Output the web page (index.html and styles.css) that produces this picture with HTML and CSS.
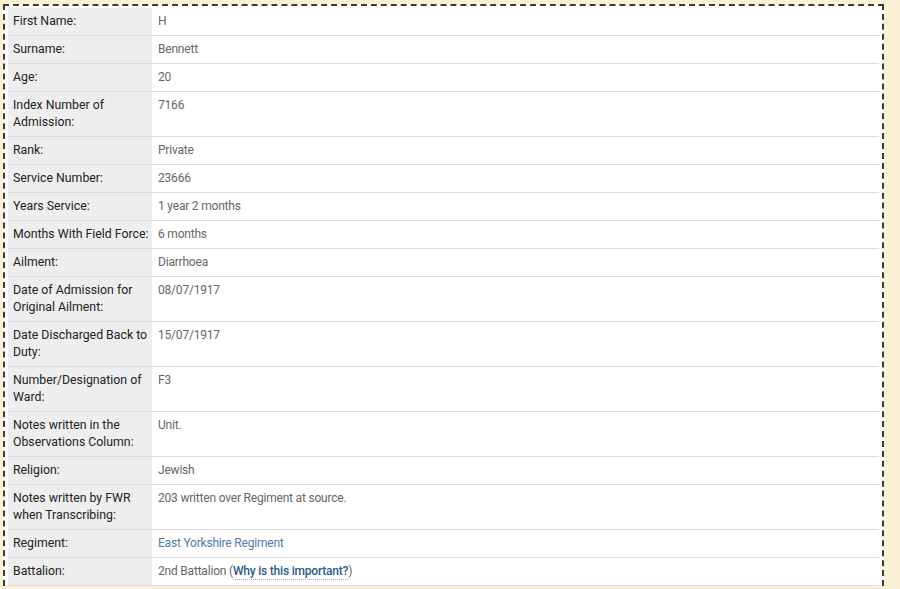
FILE: index.html
```html
<!DOCTYPE html>
<html lang="en">
<head>
    <meta charset="UTF-8">
    <title>Record</title>
    <link rel="stylesheet" href="styles.css">
</head>
<body>
    <div class="record">
        <table class="details">
            <tr><th>First Name:</th><td>H</td></tr>
            <tr><th>Surname:</th><td>Bennett</td></tr>
            <tr><th>Age:</th><td>20</td></tr>
            <tr><th>Index Number of<br>Admission:</th><td>7166</td></tr>
            <tr><th>Rank:</th><td>Private</td></tr>
            <tr><th>Service Number:</th><td>23666</td></tr>
            <tr><th>Years Service:</th><td>1 year 2 months</td></tr>
            <tr><th>Months With Field Force:</th><td>6 months</td></tr>
            <tr><th>Ailment:</th><td>Diarrhoea</td></tr>
            <tr><th>Date of Admission for<br>Original Ailment:</th><td>08/07/1917</td></tr>
            <tr><th>Date Discharged Back to<br>Duty:</th><td>15/07/1917</td></tr>
            <tr><th>Number/Designation of<br>Ward:</th><td>F3</td></tr>
            <tr><th>Notes written in the<br>Observations Column:</th><td>Unit.</td></tr>
            <tr><th>Religion:</th><td>Jewish</td></tr>
            <tr><th>Notes written by FWR<br>when Transcribing:</th><td>203 written over Regiment at source.</td></tr>
            <tr><th>Regiment:</th><td><a href="#" class="link">East Yorkshire Regiment</a></td></tr>
            <tr><th>Battalion:</th><td>2nd Battalion (<a href="#" class="help">Why is this important?</a>)</td></tr>
        </table>
    </div>
</body>
</html>
```

FILE: styles.css
```css
body {
    margin: 0;
    background-color: #f9f0d5;
    font-family: Roboto, Arial, sans-serif;
    font-size: 12px;
}

.record {
    width: 881px;
    margin: 4px 0 0 3px;
    padding: 2px 3px 0 3px;
    background-color: #fff;
    border: 2px dashed #3f3c2e;
    border-bottom: none;
    box-sizing: border-box;
}

.details {
    width: 871px;
    border-collapse: collapse;
    table-layout: fixed;
}

.details th,
.details td {
    text-align: left;
    vertical-align: top;
    line-height: 17px;
    padding: 5px 5px;
    border-bottom: 1px solid #dcdcdc;
}

.details th {
    width: 144px;
    box-sizing: border-box;
    padding-right: 0;
    white-space: nowrap;
    font-size: 12.3px;
    font-weight: normal;
    color: #222;
    background-color: #eeeeee;
}

.details td {
    font-size: 12px;
    letter-spacing: -0.2px;
    color: #666;
    padding-left: 6px;
}

.link {
    color: #4f7ca6;
    text-decoration: none;
}

.help {
    color: #2b5b8c;
    font-weight: 500;
    text-decoration: none;
    border-bottom: 1px dotted #aaa;
    padding-bottom: 1px;
}
```
